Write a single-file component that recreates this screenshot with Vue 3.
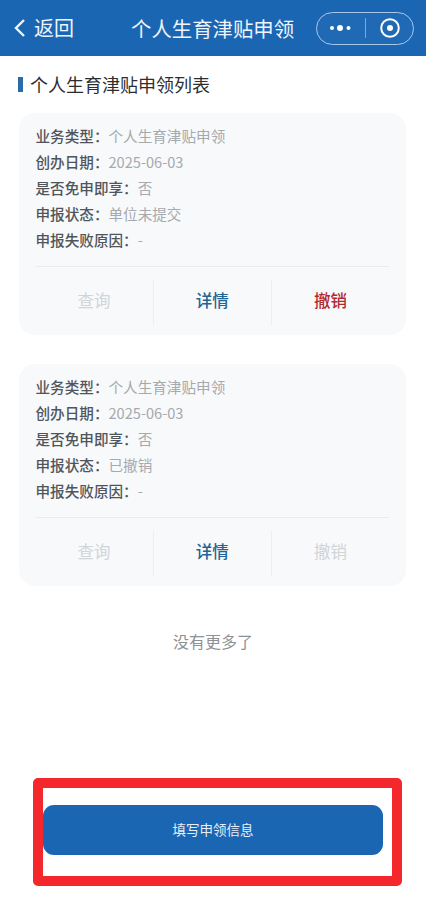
<script setup>
const cards = [
  {
    rows: [
      ['业务类型', '个人生育津贴申领'],
      ['创办日期', '2025-06-03'],
      ['是否免申即享', '否'],
      ['申报状态', '单位未提交'],
      ['申报失败原因', '-'],
    ],
    actions: [
      { label: '查询', kind: 'off' },
      { label: '详情', kind: 'info' },
      { label: '撤销', kind: 'danger' },
    ],
  },
  {
    rows: [
      ['业务类型', '个人生育津贴申领'],
      ['创办日期', '2025-06-03'],
      ['是否免申即享', '否'],
      ['申报状态', '已撤销'],
      ['申报失败原因', '-'],
    ],
    actions: [
      { label: '查询', kind: 'off' },
      { label: '详情', kind: 'info' },
      { label: '撤销', kind: 'off' },
    ],
  },
]
</script>

<template>
  <div class="page">
    <header class="nav">
      <div class="back">
        <svg class="chev" width="13" height="20" viewBox="0 0 13 20">
          <path d="M11 2 L3 10 L11 18" fill="none" stroke="#eef4fb" stroke-width="2.4" />
        </svg>
        <span>返回</span>
      </div>
      <div class="nav-title">个人生育津贴申领</div>
      <div class="capsule">
        <svg class="dots" width="22" height="10" viewBox="0 0 22 10">
          <circle cx="3" cy="5" r="2" fill="#fff" />
          <circle cx="11" cy="5" r="3" fill="#fff" />
          <circle cx="19.5" cy="5" r="2" fill="#fff" />
        </svg>
        <i class="cap-line"></i>
        <svg class="target" width="22" height="22" viewBox="0 0 22 22">
          <circle cx="11" cy="11" r="8.8" fill="none" stroke="#fff" stroke-width="2" />
          <circle cx="11" cy="11" r="3" fill="#fff" />
        </svg>
      </div>
    </header>

    <h2 class="section"><i class="mark"></i>个人生育津贴申领列表</h2>

    <section v-for="(card, i) in cards" :key="i" class="card">
      <div class="rows">
        <div v-for="row in card.rows" :key="row[0]" class="row">
          <span class="k">{{ row[0] }}：</span><span class="v">{{ row[1] }}</span>
        </div>
      </div>
      <div class="actions">
        <div v-for="a in card.actions" :key="a.label" class="action" :class="a.kind">{{ a.label }}</div>
      </div>
    </section>

    <div class="more">没有更多了</div>

    <div class="annot">
      <div class="primary">填写申领信息</div>
    </div>
  </div>
</template>

<style>
body { margin: 0; background: #fff; }
</style>

<style scoped>
.page {
  width: 426px;
  height: 901px;
  overflow: hidden;
  display: flex;
  flex-direction: column;
  background: #fff;
  font-family: "Noto Sans CJK SC", "Liberation Sans", sans-serif;
}
.nav {
  height: 56px;
  background: #1b66b3;
  display: flex;
  align-items: center;
  padding: 0 12px 0 13px;
  color: #eef4fb;
  flex: none;
}
.back {
  display: flex;
  align-items: center;
  gap: 8px;
  width: 118px;
  font-size: 20px;
  line-height: 26px;
}
.nav-title {
  font-size: 20.4px;
  line-height: 26px;
  white-space: nowrap;
}
.capsule {
  margin-left: auto;
  width: 98px;
  height: 33px;
  box-sizing: border-box;
  border: 1px solid #a9c9ea;
  border-radius: 17px;
  display: flex;
  align-items: center;
  padding-left: 12px;
  background: #2069b5;
}
.cap-line {
  width: 1px;
  height: 20px;
  margin: 0 13px 0 14px;
  background: #7fa9d6;
}
.section {
  margin: 16px 0 16px 18px;
  height: 25px;
  display: flex;
  align-items: center;
  font-size: 18px;
  line-height: 25px;
  font-weight: 400;
  color: #2b2f33;
}
.mark {
  width: 5px;
  height: 15px;
  margin-right: 7px;
  background: #2a6ba8;
}
.card {
  width: 387px;
  height: 222px;
  box-sizing: border-box;
  margin: 0 0 29px 19px;
  padding: 10px 17px 0 16.5px;
  background: #f7f9fb;
  border-radius: 16px;
  flex: none;
}
.rows {
  height: 144px;
  box-sizing: border-box;
  border-bottom: 1px solid #e9ebee;
}
.row {
  height: 26px;
  line-height: 26px;
  font-size: 14.6px;
  white-space: nowrap;
}
.k { color: #50555b; font-weight: 500; }
.v { color: #a6a9ad; }
.actions {
  display: flex;
  margin-top: 13px;
  height: 45px;
}
.action {
  flex: 1;
  box-sizing: border-box;
  padding-bottom: 5px;
  display: flex;
  align-items: center;
  justify-content: center;
  font-size: 16.5px;
  border-right: 1px solid #eceef1;
}
.action:last-child { border-right: 0; }
.off { color: #d2d4d7; }
.info { color: #1f6492; font-weight: 500; }
.danger { color: #b32a2e; font-weight: 500; }
.more {
  margin-top: 14px;
  text-align: center;
  font-size: 16px;
  line-height: 24px;
  color: #8d9094;
}
.annot {
  margin: 125px 0 0 33px;
  width: 369px;
  height: 108px;
  box-sizing: border-box;
  border: 10px solid #f4272d;
  border-radius: 5px;
  padding-top: 17px;
  flex: none;
}
.primary {
  width: 340px;
  height: 50px;
  box-sizing: border-box;
  padding-bottom: 3px;
  border-radius: 11px;
  background: #1b66b3;
  color: #e6eff8;
  display: flex;
  align-items: center;
  justify-content: center;
  font-size: 13.5px;
}
</style>
